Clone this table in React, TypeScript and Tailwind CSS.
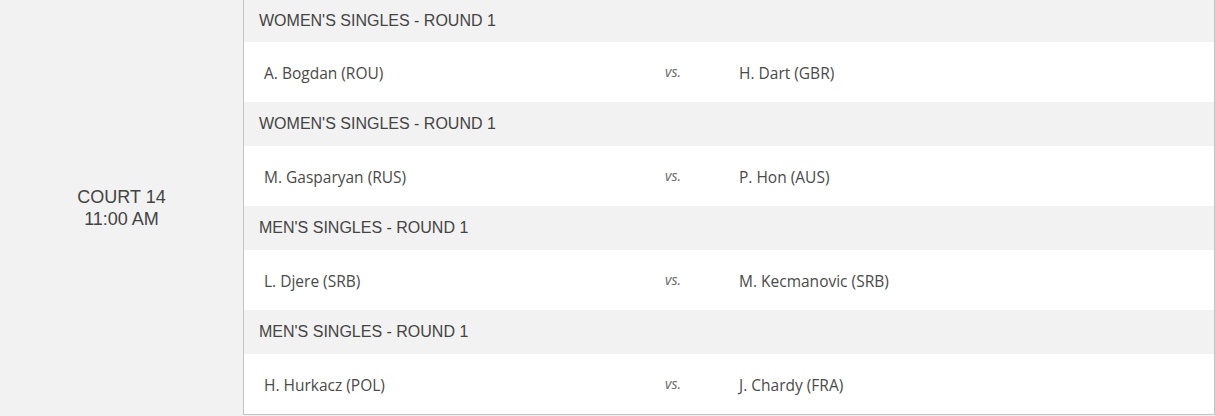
import React from "react";

type Match = { event: string; p1: string; p2: string };

const matches: Match[] = [
  { event: "WOMEN'S SINGLES - ROUND 1", p1: "A. Bogdan (ROU)", p2: "H. Dart (GBR)" },
  { event: "WOMEN'S SINGLES - ROUND 1", p1: "M. Gasparyan (RUS)", p2: "P. Hon (AUS)" },
  { event: "MEN'S SINGLES - ROUND 1", p1: "L. Djere (SRB)", p2: "M. Kecmanovic (SRB)" },
  { event: "MEN'S SINGLES - ROUND 1", p1: "H. Hurkacz (POL)", p2: "J. Chardy (FRA)" },
];

const MatchBlock = ({ event, p1, p2, first }: Match & { first: boolean }) => {
  return (
    <div>
      <div
        className={`${first ? "h-[42px]" : "h-[44px]"} bg-[#f2f2f2] flex items-center pl-[15px] text-[16px] text-[#444] font-['Liberation_Sans',Arial,sans-serif]`}>
        {event}
      </div>
      <div className="h-[60px] bg-white flex items-center pl-5 pt-[2px] text-[15.5px] leading-[20px] text-[#4a4a4a] font-['Open_Sans',sans-serif]">
        <div className="w-[401px]">{p1}</div>
        <div className="w-[74px] italic text-[14px] leading-[20px] text-[#666] -mt-[2px]">vs.</div>
        <div>{p2}</div>
      </div>
    </div>
  );
};

const App = () => {
  return (
    <div className="w-[1215px] h-[416px] flex bg-[#f2f2f2] overflow-hidden">
      <div className="w-[243px] flex-none flex flex-col items-center justify-center text-center text-[18px] leading-[22px] text-[#444] font-['Liberation_Sans',Arial,sans-serif]">
        <div>COURT 14</div>
        <div>11:00 AM</div>
      </div>
      <div className="w-[972px] h-[415px] flex-none border-l border-r border-b border-[#c4c4c4] bg-white">
        {matches.map((m, i) => (
          <MatchBlock key={i} {...m} first={i === 0} />
        ))}
      </div>
    </div>
  );
};

export default App;
